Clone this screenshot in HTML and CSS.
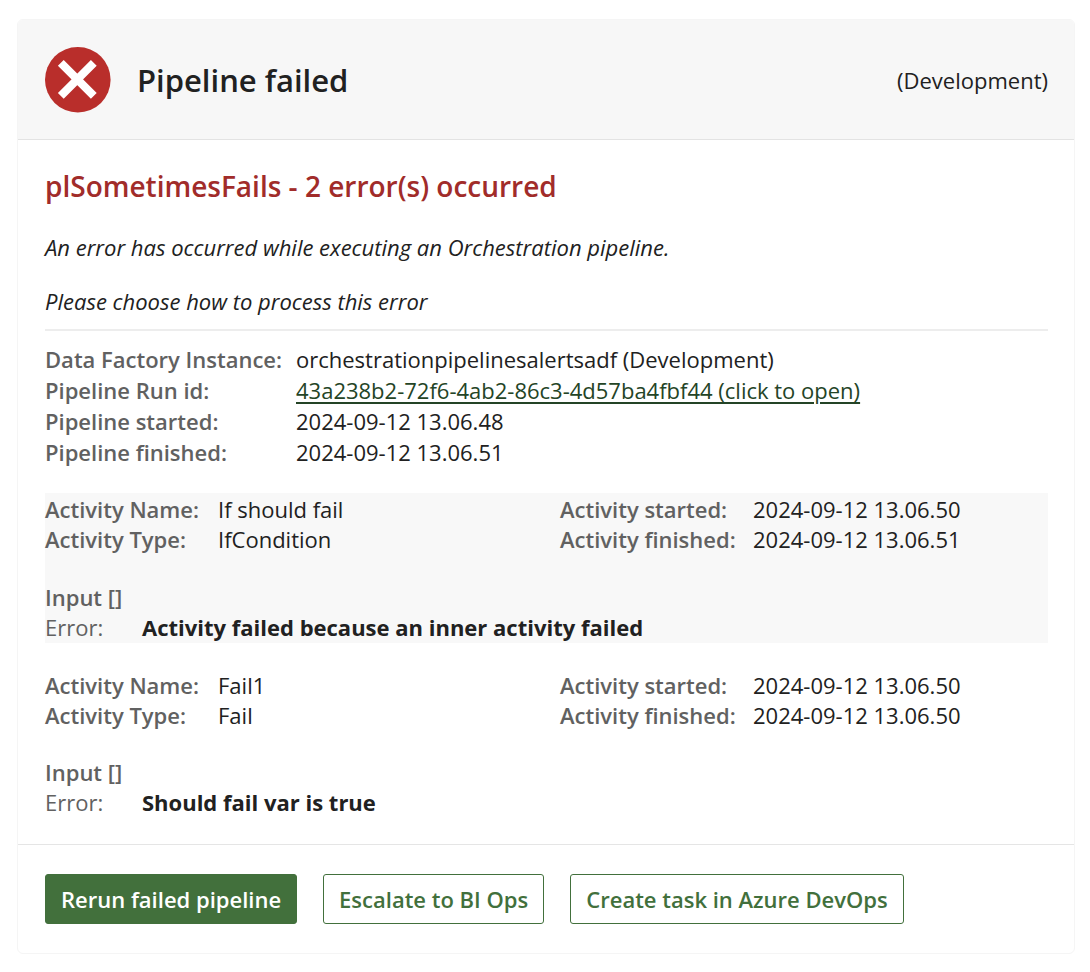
FILE: index.html
```html
<!DOCTYPE html>
<html lang="en">
<head>
<meta charset="utf-8">
<meta name="viewport" content="width=device-width, initial-scale=1">
<title>Pipeline failed</title>
<link rel="stylesheet" href="styles.css">
</head>
<body>
<main class="card">
  <header class="card-header">
    <svg class="status-icon" viewBox="0 0 66 66" aria-hidden="true">
      <circle cx="32.8" cy="32.8" r="32.8" fill="#b92e2b"/>
      <path d="M15.8 15.8 L48.8 48.8 M48.8 15.8 L15.8 48.8" fill="none" stroke="#fff" stroke-width="8.2"/>
    </svg>
    <h1 class="title">Pipeline failed</h1>
    <span class="environment">(Development)</span>
  </header>

  <section class="card-body">
    <h2 class="error-title">plSometimesFails - 2 error(s) occurred</h2>
    <p class="note">An error has occurred while executing an Orchestration pipeline.</p>
    <p class="note">Please choose how to process this error</p>
    <hr class="divider">

    <dl class="facts facts-run">
      <dt>Data Factory Instance:</dt><dd>orchestrationpipelinesalertsadf (Development)</dd>
      <dt>Pipeline Run id:</dt><dd><a class="run-link" href="#run">43a238b2-72f6-4ab2-86c3-4d57ba4fbf44 (click to open)</a></dd>
      <dt>Pipeline started:</dt><dd>2024-09-12 13.06.48</dd>
      <dt>Pipeline finished:</dt><dd>2024-09-12 13.06.51</dd>
    </dl>

    <article class="activity activity-shaded">
      <div class="activity-facts">
        <dl class="facts facts-name">
          <dt>Activity Name:</dt><dd>If should fail</dd>
          <dt>Activity Type:</dt><dd>IfCondition</dd>
        </dl>
        <dl class="facts facts-time">
          <dt>Activity started:</dt><dd>2024-09-12 13.06.50</dd>
          <dt>Activity finished:</dt><dd>2024-09-12 13.06.51</dd>
        </dl>
      </div>
      <div class="activity-result">
        <p class="input-line">Input []</p>
        <dl class="facts facts-error">
          <dt>Error:</dt><dd>Activity failed because an inner activity failed</dd>
        </dl>
      </div>
    </article>

    <article class="activity">
      <div class="activity-facts">
        <dl class="facts facts-name">
          <dt>Activity Name:</dt><dd>Fail1</dd>
          <dt>Activity Type:</dt><dd>Fail</dd>
        </dl>
        <dl class="facts facts-time">
          <dt>Activity started:</dt><dd>2024-09-12 13.06.50</dd>
          <dt>Activity finished:</dt><dd>2024-09-12 13.06.50</dd>
        </dl>
      </div>
      <div class="activity-result">
        <p class="input-line">Input []</p>
        <dl class="facts facts-error">
          <dt>Error:</dt><dd>Should fail var is true</dd>
        </dl>
      </div>
    </article>
  </section>

  <footer class="card-footer">
    <button type="button" class="button button-primary">Rerun failed pipeline</button>
    <button type="button" class="button">Escalate to BI Ops</button>
    <button type="button" class="button">Create task in Azure DevOps</button>
  </footer>
</main>
</body>
</html>
```

FILE: styles.css
```css
* {
  box-sizing: border-box;
}

body {
  margin: 0;
  padding: 19px 15px 18px 17px;
  background: #fff;
  color: #212121;
  font-family: "Segoe UI", "Open Sans", "Noto Sans", sans-serif;
  font-size: 22px;
  line-height: 30px;
}

h1, h2, p, dl, dd {
  margin: 0;
}

.card {
  overflow: hidden;
  border: 1px solid #f5f5f5;
  border-radius: 6px;
}

.card-header {
  display: flex;
  align-items: center;
  gap: 26px;
  padding: 27px 26px 26px 27px;
  background: #f7f7f7;
  border-bottom: 1px solid #e3e3e3;
}

.status-icon {
  flex: none;
  width: 66px;
  height: 66px;
}

.title {
  flex: 1;
  font-size: 31px;
  font-weight: 600;
  line-height: 40px;
}

.card-body {
  padding: 27px 26px 27px 27px;
}

.error-title {
  color: #a12c2a;
  font-size: 28px;
  font-weight: 600;
  line-height: 38px;
}

.note {
  margin-top: 24px;
  font-style: italic;
}

.error-title + .note {
  margin-top: 27px;
}

.divider {
  height: 2px;
  margin: 13px 0;
  border: 0;
  background: #ededed;
}

.facts {
  display: grid;
}

.facts dt {
  color: #616161;
  font-weight: 600;
}

.facts-run {
  grid-template-columns: 251px 1fr;
  line-height: 31px;
}

.run-link {
  color: #244426;
  text-decoration-thickness: 2px;
  text-underline-offset: 3px;
}

.activity {
  display: grid;
  gap: 27px;
  margin-top: 27px;
}

.activity-shaded {
  gap: 28px;
  margin-top: 25px;
  padding: 1px 0;
  background: #f8f8f8;
}

.activity-facts {
  display: grid;
  grid-template-columns: 515fr 488fr;
}

.facts-name {
  grid-template-columns: 173px 1fr;
}

.facts-time {
  grid-template-columns: 193px 1fr;
}

.facts-error {
  grid-template-columns: 97px 1fr;
}

.facts-error dd {
  font-weight: 700;
}

.input-line {
  color: #616161;
  font-weight: 600;
}

.facts-error dt {
  font-weight: 500;
}

.card-footer {
  display: flex;
  flex-wrap: wrap;
  gap: 26px;
  padding: 29px 27px;
  border-top: 1px solid #e5e5e5;
}

.button {
  height: 50px;
  padding: 0 15px;
  border: 1px solid #42703c;
  border-radius: 3px;
  background: #fff;
  color: #42703c;
  font: inherit;
  font-weight: 600;
}

.button-primary {
  background: #42703c;
  color: #fff;
}
```
